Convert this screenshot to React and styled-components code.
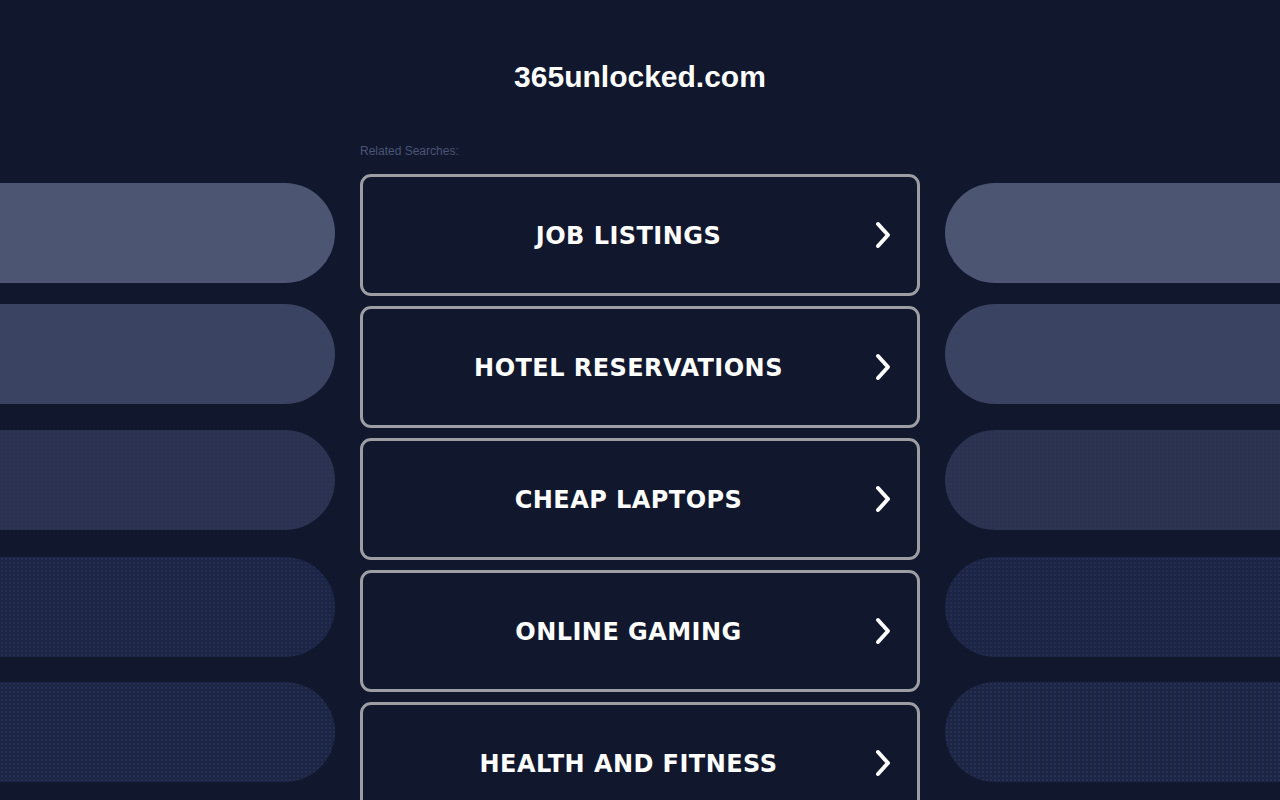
import React from "react";
import styled, { createGlobalStyle } from "styled-components";

const Global = createGlobalStyle`
  html, body { margin: 0; padding: 0; background: #11172d; overflow: hidden; }
  body { font-family: "Liberation Sans", Arial, sans-serif; }
`;

const Page = styled.div`
  width: 1280px;
  height: 800px;
  overflow: hidden;
  background: #11172d;
`;

const Header = styled.header`
  height: 120px;
  box-sizing: border-box;
  padding-top: 59px;
  text-align: center;
`;

const Title = styled.h1`
  margin: 0;
  font-family: "Liberation Sans", Arial, sans-serif;
  font-weight: 700;
  font-size: 30px;
  line-height: 36px;
  color: #ffffff;
`;

const Grid = styled.div`
  display: grid;
  grid-template-columns: 1fr 560px 1fr;
  column-gap: 25px;
`;

const Side = styled.div`
  display: flex;
  flex-direction: column;
  gap: 25px;
  padding-top: 63px;
`;

const Pill = styled.div`
  height: 100px;
  margin-top: ${(p) => p.$shift || 0}px;
  background-color: ${(p) => p.$color};
  background-image: ${(p) =>
    p.$dots
      ? `radial-gradient(rgba(70,90,140,${p.$dots}) 0.6px, transparent 0.9px)`
      : "none"};
  background-size: 4px 4px;
  border-radius: ${(p) => (p.$side === "left" ? "0 50px 50px 0" : "50px 0 0 50px")};
`;

const Main = styled.main`
  display: flex;
  flex-direction: column;
`;

const Label = styled.div`
  margin-top: 24px;
  margin-bottom: 16px;
  font-family: "Liberation Sans", Arial, sans-serif;
  font-size: 12px;
  line-height: 14px;
  color: #4a5577;
`;

const List = styled.div`
  display: flex;
  flex-direction: column;
  gap: 10px;
`;

const LinkButton = styled.a`
  display: flex;
  align-items: center;
  box-sizing: border-box;
  height: 122px;
  border: 3px solid #9c9ea3;
  border-radius: 11px;
  background: #11172d;
  text-decoration: none;
  padding: 2px 20px 0 0;
  cursor: pointer;
`;

const LinkText = styled.span`
  flex: 1;
  text-align: center;
  font-family: "DejaVu Sans", Verdana, sans-serif;
  font-weight: 700;
  font-size: 24px;
  letter-spacing: 0.45px;
  color: #ffffff;
  padding-left: 23px;
`;

const Arrow = styled.svg`
  width: 26px;
  height: 28px;
  display: block;
  margin-top: -2px;
`;

const Chevron = () => (
  <Arrow viewBox="0 0 26 28">
    <polyline
      points="7,3 17,14 7,25"
      fill="none"
      stroke="#ffffff"
      strokeWidth="4"
      strokeLinecap="round"
      strokeLinejoin="round"
    />
  </Arrow>
);

const pills = [
  { color: "#4c5673" },
  { color: "#3a4361", shift: -4 },
  { color: "#2a3250", dots: 0.12, shift: 1 },
  { color: "#1c2545", dots: 0.25, shift: 2 },
  { color: "#1c2544", dots: 0.3 },
];

const items = [
  "JOB LISTINGS",
  "HOTEL RESERVATIONS",
  "CHEAP LAPTOPS",
  "ONLINE GAMING",
  "HEALTH AND FITNESS",
];

export default function App() {
  return (
    <Page>
      <Global />
      <Header>
        <Title>365unlocked.com</Title>
      </Header>
      <Grid>
        <Side>
          {pills.map((p, i) => (
            <Pill key={i} $color={p.color} $dots={p.dots} $shift={p.shift} $side="left" />
          ))}
        </Side>
        <Main>
          <Label>Related Searches:</Label>
          <List>
            {items.map((t) => (
              <LinkButton key={t}>
                <LinkText>{t}</LinkText>
                <Chevron />
              </LinkButton>
            ))}
          </List>
        </Main>
        <Side>
          {pills.map((p, i) => (
            <Pill key={i} $color={p.color} $dots={p.dots} $shift={p.shift} $side="right" />
          ))}
        </Side>
      </Grid>
    </Page>
  );
}
